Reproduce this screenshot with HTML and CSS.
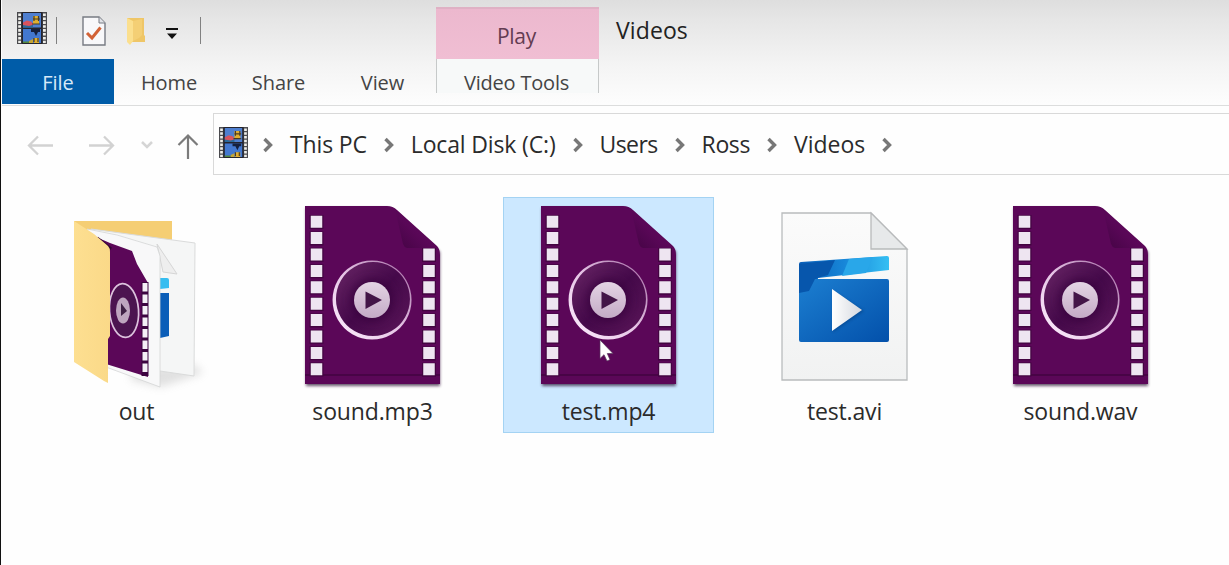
FILE: index.html
```html
<!DOCTYPE html>
<html lang="en">
<head>
<meta charset="utf-8">
<title>Videos</title>
<link rel="stylesheet" href="styles.css">
</head>
<body>
<svg class="defs" width="0" height="0" aria-hidden="true">
  <defs>
    <linearGradient id="disc" x1="0" y1="0" x2="1" y2="1"><stop offset="0" stop-color="#6a2767"/><stop offset=".5" stop-color="#45094a"/><stop offset="1" stop-color="#5b1659"/></linearGradient>
    <linearGradient id="ring" x1="0" y1="1" x2="1" y2="0"><stop offset="0" stop-color="#fff0ff"/><stop offset=".5" stop-color="#e5c3e5"/><stop offset="1" stop-color="#9f6ba0"/></linearGradient>
    <linearGradient id="hub" x1="0" y1="0" x2="0" y2="1"><stop offset="0" stop-color="#e4d4e4"/><stop offset="1" stop-color="#c4abc6"/></linearGradient>
    <linearGradient id="fold" x1="0" y1="1" x2="1" y2="0"><stop offset="0" stop-color="#430443"/><stop offset=".45" stop-color="#590757"/><stop offset="1" stop-color="#5e0c5a"/></linearGradient>
    <linearGradient id="bar" x1="0" y1="0" x2="1" y2="0"><stop offset="0" stop-color="#0a5eb8"/><stop offset=".5" stop-color="#1786d8"/><stop offset="1" stop-color="#35bff3"/></linearGradient>
    <linearGradient id="clap" x1="0" y1="0" x2="1" y2="1"><stop offset="0" stop-color="#1c7fd1"/><stop offset="1" stop-color="#0350aa"/></linearGradient>
    <linearGradient id="play" x1="0" y1="0" x2="1" y2="0"><stop offset="0" stop-color="#fff"/><stop offset="1" stop-color="#d4d8df"/></linearGradient>
    <linearGradient id="paper" x1="0" y1="0" x2="0" y2="1"><stop offset="0" stop-color="#fbfbfb"/><stop offset="1" stop-color="#f1f2f2"/></linearGradient>
    <linearGradient id="flap" x1="0" y1="0" x2="1" y2="0"><stop offset="0" stop-color="#fddf91"/><stop offset="1" stop-color="#fad988"/></linearGradient>
    <filter id="soft" x="-20%" y="-20%" width="140%" height="140%"><feGaussianBlur stdDeviation="1.4"/></filter>
    <filter id="wide" x="-50%" y="-50%" width="200%" height="200%"><feGaussianBlur stdDeviation="4"/></filter>

    <symbol id="reel" viewBox="0 0 30 32">
      <rect width="30" height="32" fill="#4a4a4e"/>
      <path d="M2.600 1.500V31M27.400 1.500V31" stroke="#eeeeea" stroke-width="2.800" stroke-dasharray="2.600 1.300"/>
      <path d="M4.500 0H25.500V32H4.500Z" fill="#24242c"/>
      <rect x="6" y="1" width="18" height="14.500" fill="#4f7fd0"/>
      <rect x="6" y="17" width="18" height="14" fill="#4378d0"/>
      <path d="M6 12h10v3.500H6z" fill="#2b6a9b"/>
      <path d="M6 10.500l4-2 4 1 3 3-5 1.500-6-1z" fill="#d9535d"/>
      <path d="M16 4h6v8h-6zM17 26h5v5h-5z" fill="#dfae30"/>
      <path d="M16 7h7M17 4v5M21.500 4v5M15 12h8M17 26v4M21 26v4" stroke="#4a3b20" stroke-width="1.200" fill="none"/>
      <path d="M14 17h9v3h-2l-2 4-2-4h-3z" fill="#15203e"/>
      <path d="M12 29l4-2v4h-4z" fill="#c6a634"/><path d="M6 29.500h6V31H6z" fill="#52883c"/>
    </symbol>

    <symbol id="film" viewBox="0 0 211 194">
      <path d="M39 11H122L173 55V189H39Z" fill="#280a2d" opacity=".7" filter="url(#soft)"/>
      <path fill="#5b0758" d="M38 9H120Q126 9 130 13L170 49Q173 52 173 58V187H38Z"/>
      <path fill="url(#fold)" d="M128 12L168 49 162 51 140 51Q137 50 136 47Z"/>
      <path d="M38 178H173" stroke="#420440" stroke-width="1.500"/>
      <path d="M49.500 18V182" stroke="#430441" stroke-width="14" stroke-dasharray="14 2.400"/>
      <path d="M162 51V182" stroke="#430441" stroke-width="14" stroke-dasharray="14 2.400"/>
      <path class="holes" d="M49.500 18.700V180"/>
      <path class="holes" d="M162 51.500V180"/>
      <circle cx="105" cy="103" r="38" fill="url(#disc)"/>
      <circle cx="105" cy="103" r="22" fill="#35043a" opacity=".6" filter="url(#wide)"/>
      <path fill="url(#ring)" fill-rule="evenodd" d="M105 63.500a39.500 39.500 0 1 0 .1 0ZM106 65a37 37 0 1 1-.1 0Z"/>
      <circle cx="105" cy="103" r="18" fill="url(#hub)"/>
      <path fill="#431547" d="M98.500 94.500V112L115 103Z"/>
    </symbol>
    <symbol id="crumb" viewBox="0 0 12 16"><path d="M2.500 2L8.500 8 2.500 14" fill="none" stroke="#777" stroke-width="3.400"/></symbol>
  </defs>
</svg>

<div class="window">
  <header class="ribbon">
    <div class="quick">
      <svg class="reel" width="30" height="32"><use href="#reel"/></svg>
      <i class="rule"></i>
      <svg class="check" width="24" height="30" viewBox="0 0 24 30"><path d="M1 1H17L23 7V29H1Z" fill="#f8f8fa" stroke="#777b83" stroke-width="1.400"/><path d="M17 1V7H23" fill="#e1e3e8" stroke="#777b83"/><path d="M5 17L10 22 18.500 11.500" fill="none" stroke="#d26236" stroke-width="3"/></svg>
      <svg class="dir" width="20" height="28" viewBox="0 0 20 28"><path d="M1 1H18V18L19 19V25H1Z" fill="#efc667"/><path d="M1 1L7 4V24L4 28 1 25Z" fill="#fbdf8e"/><path d="M7 4L16 2V18L13 21 7 24Z" fill="#f4cf75"/></svg>
      <svg class="more" width="12" height="12" viewBox="0 0 12 12"><path d="M0 0H12V2H0ZM1 5.500H11L6 11Z" fill="#111"/></svg>
      <i class="rule last"></i>
    </div>
    <div class="context">Play</div>
    <h1 class="title">Videos</h1>
    <nav class="tabs">
      <span class="tab file">File</span><span class="tab home">Home</span><span class="tab share">Share</span><span class="tab view">View</span>
    </nav>
    <div class="tools">Video Tools</div>
  </header>

  <section class="nav">
    <div class="arrows">
      <svg width="214" height="70" viewBox="0 0 214 70" fill="none">
        <path d="M53 39.500H29M38 30.500L29 39.500 38 48.500" stroke="#d2d2d2" stroke-width="2.300"/>
        <path d="M89 39.500H113M104 30.500L113 39.500 104 48.500" stroke="#d2d2d2" stroke-width="2.300"/>
        <path d="M142 36L147 41 152 36" stroke="#d5d5d5" stroke-width="2.500"/>
        <path d="M188 53V30M178.500 39L188 29.500 197.500 39" stroke="#7b7b7b" stroke-width="2.200"/>
      </svg>
    </div>
    <div class="address">
      <svg class="reel" width="29" height="31"><use href="#reel"/></svg>
      <svg class="sep" width="12" height="16"><use href="#crumb"/></svg>
      <span class="crumb pc">This PC</span><svg class="sep" width="12" height="16"><use href="#crumb"/></svg>
      <span class="crumb disk">Local Disk (C:)</span><svg class="sep" width="12" height="16"><use href="#crumb"/></svg>
      <span class="crumb users">Users</span><svg class="sep" width="12" height="16"><use href="#crumb"/></svg>
      <span class="crumb ross">Ross</span><svg class="sep" width="12" height="16"><use href="#crumb"/></svg>
      <span class="crumb vids">Videos</span><svg class="sep" width="12" height="16"><use href="#crumb"/></svg>
    </div>
  </section>

  <main class="files">
    <div class="item">
      <svg width="211" height="194" viewBox="0 0 211 194">
        <path d="M100 183L130 190 172 176 164 168 100 170Z" fill="#888" opacity=".25" filter="url(#wide)"/>
        <path d="M43 24H141V100H43Z" fill="#f5ce74"/>
        <path d="M60 32L164 46 163 179 129 174 66 160Z" fill="#f5f6f6" stroke="#dadbdb"/>
        <path d="M126 47L132 75 146 77Z" fill="#eeeeee" stroke="#d5d5d5"/>
        <path d="M129 81H136Q138 81 138 83V91L129 92Z" fill="#36bdf0"/>
        <path d="M129 96H138V139L129 141Z" fill="#0b5eb8"/>
        <path d="M56 32L86 38 126 50 129 59V190L75 170Z" fill="#f8f8f9" stroke="#d4d6d6" stroke-width=".8"/>
        <path d="M65 40L79 46 101 54 106 67 117 86V180L75 167Z" fill="#5b0758"/>
        <path d="M66 41L80 52" stroke="#320634" stroke-width="3"/>
        <path d="M114 85V179" stroke="#3d0440" stroke-width="7"/>
        <path d="M114 86V176" stroke="#f5eff6" stroke-width="5" stroke-dasharray="8.500 3"/>
        <ellipse cx="93" cy="113.500" rx="14.500" ry="27" fill="#4c1450" stroke="#dcc2dd" stroke-width="1.700" transform="rotate(-4 93 113)"/>
        <ellipse cx="92" cy="113.500" rx="7" ry="13" fill="#bea6bf"/><path d="M90 106V119L96 114Z" fill="#3f2145"/>
        <path d="M43 24L63 37 77 49Q79 51 79 55V139L77 142V186L73 184 43 165Z" fill="url(#flap)"/>
      </svg>
      <span class="name">out</span>
    </div>
    <div class="item"><svg width="211" height="194"><use href="#film"/></svg><span class="name">sound.mp3</span></div>
    <div class="item selected"><svg width="211" height="194"><use href="#film"/></svg><span class="name">test.mp4</span>
      <svg class="cursor" width="16" height="24" viewBox="0 0 16 24"><path d="M1 1V19.500L5 15.700 8 22 11 20.700 8.300 14.500H14Z" fill="#fff" stroke="#57355c" stroke-width=".7"/></svg>
    </div>
    <div class="item">
      <svg width="211" height="194" viewBox="0 0 211 194">
        <path d="M43 16H132L168 52V183H43Z" fill="url(#paper)" stroke="#b9bcbd" stroke-width="1.300"/>
        <path d="M132 16V52H168Z" fill="#e7e9ea" stroke="#b8babb" stroke-width="1.300"/>
        <path d="M62 65L148 59Q150 59 150 61V73L79 81V100H60V67Q60 65 62 65Z" fill="url(#bar)"/>
        <path d="M60 67L96 63 89 78 78 81 71 97H60Z" fill="#0756ac"/>
        <path d="M110 62L134 60 127 76 103 79Z" fill="#29a7e9"/>
        <path d="M60 96L70 94 76 82H148Q150 82 150 84V143Q150 145 148 145H62Q60 145 60 143Z" fill="url(#clap)"/>
        <path d="M94 94V135L125 114Z" fill="#06336f" opacity=".45" filter="url(#soft)"/>
        <path d="M93 92V134L123 113Z" fill="url(#play)"/>
      </svg>
      <span class="name">test.avi</span>
    </div>
    <div class="item"><svg width="211" height="194"><use href="#film"/></svg><span class="name">sound.wav</span></div>
  </main>
</div>
</body>
</html>
```

FILE: styles.css
```css
* { box-sizing: border-box; }
body { margin: 0; background: #fff; font-family: "Open Sans", "Noto Sans", sans-serif; color: #2b2b2b; overflow: hidden; }
svg { display: block; flex: none; }
.defs { position: absolute; }
.window { height: 565px; border-left: 1px solid #111; padding-left: 1px; background: #fefefe; }
.ribbon {
  display: grid; grid-template: 59px 46px / 434px 163px 1fr; height: 106px;
  background: linear-gradient(#dedede, #e6e6e6 20px, #f4f4f4 65px, #fdfdfd 104px);
  border-bottom: 1px solid #dcdddd;
}
.quick { display: flex; align-items: center; padding-left: 15px; height: 59px; padding-bottom: 3px; }
.rule { width: 1px; height: 27px; background: #818181; margin: 5px 0 0 9px; }
.check { margin: 6px 0 0 25px; }
.dir { margin: 6px 0 0 20px; }
.more { margin: 12px 0 0 20px; }
.rule.last { margin-left: 22px; }
.context { margin-top: 7px; background: linear-gradient(#ecb8ce, #f0bed3); border-top: 2px solid #dfb1c4; color: #633c52; font-size: 21px; line-height: 54px; text-align: center; letter-spacing: -.3px; padding-right: 2px; }
.title { margin: 0; padding: 1px 0 0 17px; font-size: 23px; font-weight: 400; line-height: 58px; letter-spacing: .1px; color: #222; }
.tabs { display: flex; font-size: 20px; line-height: 46px; color: #444; letter-spacing: -.1px; }
.tab { text-align: center; padding-top: 1px; }
.file { width: 112px; background: #005ca8; color: #d7e9f8; height: 45px; }
.home { width: 110px; }
.share { width: 109px; }
.view { width: 99px; }
.tools { height: 34px; border: solid #c6c9c9; border-width: 0 1px; background: #f7f9f9; color: #444; font-size: 20px; line-height: 47px; text-align: center; letter-spacing: -.2px; padding-right: 2px; }
.nav { display: flex; height: 70px; }
.arrows { width: 211px; }
.arrows svg { margin-left: -2px; }
.address { flex: 1; display: flex; align-items: center; height: 62px; margin-top: 7px; padding-left: 5px; border: 1px solid #d9d9d9; border-right: 0; font-size: 23px; }
.address .reel { margin-bottom: 3px; margin-right: 14px; }
.crumb { margin: 0 16px; white-space: nowrap; letter-spacing: -.15px; line-height: 60px; }
.disk { letter-spacing: -.15px; }
.users { letter-spacing: -.6px; }
.ross { letter-spacing: -.4px; }
.vids { letter-spacing: 0; }
.sep { margin-top: 2px; }
.files { display: flex; gap: 25px; padding: 21px 0 0 29px; }
.item { position: relative; width: 211px; height: 236px; flex: none; text-align: center; }
.item svg { overflow: visible; }
.selected { background: #cce8ff; box-shadow: inset 0 0 0 1px #a4d3f3; }
.name { display: block; font-size: 23px; line-height: 38px; margin-top: 1px; letter-spacing: -.15px; }
.cursor { position: absolute; left: 96px; top: 142px; }
.holes { fill: none; stroke: #eee5f1; stroke-width: 11.500px; stroke-dasharray: 12 4.400; }
```
